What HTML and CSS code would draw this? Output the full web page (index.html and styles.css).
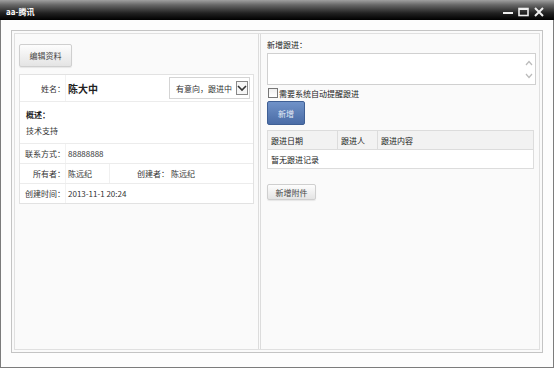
FILE: index.html
```html
<!DOCTYPE html>
<html lang="zh-CN">
<head>
  <meta charset="UTF-8">
  <title>aa-腾讯</title>
  <link rel="stylesheet" href="styles.css">
</head>
<body>
  <div class="window">
    <div class="titlebar">
      <span class="title">aa-腾讯</span>
      <div class="controls">
        <svg width="10" height="10" viewBox="0 0 10 10"><rect x="0" y="5" width="10" height="2" fill="#eee"/></svg>
        <svg width="11" height="10" viewBox="0 0 11 10"><rect x="1" y="1.5" width="9" height="7" fill="none" stroke="#eee" stroke-width="1.6"/><rect x="1" y="1" width="9" height="2" fill="#eee"/></svg>
        <svg width="10" height="10" viewBox="0 0 10 10"><path d="M1 1 L9 9 M9 1 L1 9" stroke="#eee" stroke-width="2"/></svg>
      </div>
    </div>

    <div class="frame">
      <div class="panel">
        <div class="inner">
          <div class="col-left">
            <button class="btn btn-edit">编辑资料</button>
            <div class="info">
              <div class="row row-name">
                <div class="label">姓名：</div>
                <div class="name">陈大中</div>
                <div class="select">
                  <span>有意向，跟进中</span>
                  <span class="arrow">
                    <svg width="10" height="7" viewBox="0 0 10 7"><path d="M1 1 L5 5 L9 1" fill="none" stroke="#333" stroke-width="1.6"/></svg>
                  </span>
                </div>
              </div>
              <div class="row-desc">
                <div class="desc-title">概述：</div>
                <div class="desc-text">技术支持</div>
              </div>
              <div class="row">
                <div class="label">联系方式：</div>
                <div class="value">88888888</div>
              </div>
              <div class="row">
                <div class="label">所有者：</div>
                <div class="value owner">陈远纪</div>
                <div class="label label2">创建者：</div>
                <div class="value">陈远纪</div>
              </div>
              <div class="row">
                <div class="label">创建时间：</div>
                <div class="value">2013-11-1 20:24</div>
              </div>
            </div>
          </div>

          <div class="col-right">
            <div class="field-title">新增跟进：</div>
            <div class="textarea">
              <div class="scroll">
                <svg width="8" height="6" viewBox="0 0 8 6"><path d="M1 5 L4 1.5 L7 5" fill="none" stroke="#bbb" stroke-width="1.2"/></svg>
                <svg width="8" height="6" viewBox="0 0 8 6"><path d="M1 1 L4 4.5 L7 1" fill="none" stroke="#bbb" stroke-width="1.2"/></svg>
              </div>
            </div>
            <label class="check">
              <span class="box"></span>需要系统自动提醒跟进
            </label>
            <button class="btn-blue">新增</button>
            <table class="records">
              <thead>
                <tr>
                  <th class="c-date">跟进日期</th>
                  <th class="c-user">跟进人</th>
                  <th>跟进内容</th>
                </tr>
              </thead>
              <tbody>
                <tr><td colspan="3">暂无跟进记录</td></tr>
              </tbody>
            </table>
            <button class="btn btn-attach">新增附件</button>
          </div>
        </div>
      </div>
    </div>
  </div>
</body>
</html>
```

FILE: styles.css
```css
body {
  margin: 0;
  padding: 0;
  font-family: "Noto Sans CJK SC", "Liberation Sans", sans-serif;
  font-size: 8px;
  color: #333;
  background: #fff;
}
.window {
  width: 554px;
  height: 368px;
  box-sizing: border-box;
  border: 1px solid #7c7c7c;
  border-top: none;
  display: flex;
  flex-direction: column;
  background: #fdfdfd;
}
.titlebar {
  height: 20px;
  flex: none;
  margin: 0 -1px;
  background: linear-gradient(#a0a0a0, #666 25%, #222 65%, #000);
  display: flex;
  align-items: center;
  justify-content: space-between;
  padding: 0 10px 0 6px;
}
.title {
  color: #fff;
  font-weight: bold;
  font-size: 8px;
  line-height: 10px;
  margin-top: 3px;
}
.controls {
  display: flex;
  gap: 5px;
  margin-top: 3px;
}
.controls svg {
  display: block;
}
.frame {
  flex: 1;
  padding: 10px 10px 14px 10px;
  display: flex;
}
.panel {
  flex: 1;
  border: 1px solid #c4c4c4;
  padding: 2px;
  background: #fafafa;
  display: flex;
}
.inner {
  flex: 1;
  border: 1px solid #e0e0e0;
  display: flex;
}
.col-left {
  width: 239px;
  flex: none;
  border-right: 1px solid #dcdcdc;
  padding: 10px 0 0 4px;
}
.col-right {
  flex: 1;
  border-left: 1px solid #dcdcdc;
  margin-left: 1px;
  padding: 5px 3px 0 6px;
}
.btn {
  font-family: inherit;
  font-size: 8px;
  color: #444;
  border: 1px solid #cfcfcf;
  border-radius: 2px;
  background: linear-gradient(#fdfdfd, #e4e4e4);
  box-shadow: 0 1px 1px rgba(0,0,0,0.08);
  padding: 0;
  display: block;
}
.btn-edit {
  width: 53px;
  height: 23px;
}
.info {
  margin-top: 7px;
  width: 233px;
  background: #fff;
  border: 1px solid #e2e2e2;
}
.row {
  display: flex;
  align-items: center;
  height: 19px;
  border-top: 1px solid #ececec;
}
.row-name {
  height: 26px;
  border-top: none;
}
.label {
  width: 45px;
  flex: none;
  text-align: right;
  align-self: stretch;
  display: flex;
  align-items: center;
  justify-content: flex-end;
  border-right: 1px solid #f2f2f2;
  color: #333;
}
.value {
  padding-left: 2px;
}
.name {
  padding-left: 2px;
  font-size: 10px;
  font-weight: bold;
  color: #222;
  flex: 1;
}
.select {
  width: 81px;
  height: 22px;
  margin-right: 3px;
  border: 1px solid #d4d4d4;
  background: #fff;
  display: flex;
  align-items: center;
  justify-content: space-between;
  padding: 0 1px 0 6px;
  box-sizing: border-box;
  white-space: nowrap;
}
.arrow {
  width: 12px;
  height: 14px;
  flex: none;
  box-sizing: border-box;
  border: 1px solid #888;
  display: flex;
  align-items: center;
  justify-content: center;
  background: #f6f6f6;
}
.arrow svg {
  display: block;
}
.row-desc {
  border-top: 1px solid #ececec;
  padding: 7px 0 5px 6px;
  height: 29px;
}
.desc-title {
  font-weight: bold;
  line-height: 12px;
  color: #222;
}
.desc-text {
  margin-top: 4px;
  line-height: 12px;
}
.owner {
  width: 41px;
  align-self: stretch;
  display: flex;
  align-items: center;
  border-right: 1px solid #f0f0f0;
}
.label2 {
  width: 59px;
  border-right: none;
}
.field-title {
  line-height: 12px;
  color: #222;
}
.textarea {
  margin-top: 2px;
  height: 32px;
  box-sizing: border-box;
  border: 1px solid #d0d0d0;
  background: #fff;
  display: flex;
  justify-content: flex-end;
}
.scroll {
  width: 12px;
  display: flex;
  flex-direction: column;
  justify-content: space-between;
  align-items: center;
  padding: 6px 0 5px;
}
.scroll svg {
  display: block;
}
.check {
  display: flex;
  align-items: center;
  height: 12px;
  margin-top: 2px;
  color: #222;
}
.box {
  width: 10px;
  height: 10px;
  box-sizing: border-box;
  border: 1px solid #777;
  background: linear-gradient(#eee, #fff);
  margin: 0 1px 0 1px;
}
.btn-blue {
  display: block;
  margin-top: 2px;
  width: 38px;
  height: 24px;
  padding: 0;
  border: 1px solid #3f5f94;
  border-radius: 2px;
  background: linear-gradient(#7092c8, #4a6ca6);
  color: #e4ebf6;
  font-family: inherit;
  font-size: 8px;
}
.records {
  margin-top: 5px;
  width: 267px;
  border-collapse: collapse;
  background: #fff;
}
.records th, .records td {
  border: 1px solid #dcdcdc;
  height: 18px;
  padding: 0 0 0 3px;
  text-align: left;
  font-weight: normal;
  color: #222;
}
.records th {
  background: #f2f2f2;
}
.c-date {
  width: 66px;
}
.c-user {
  width: 36px;
}
.btn-attach {
  margin-top: 15px;
  width: 49px;
  height: 16px;
}
```
